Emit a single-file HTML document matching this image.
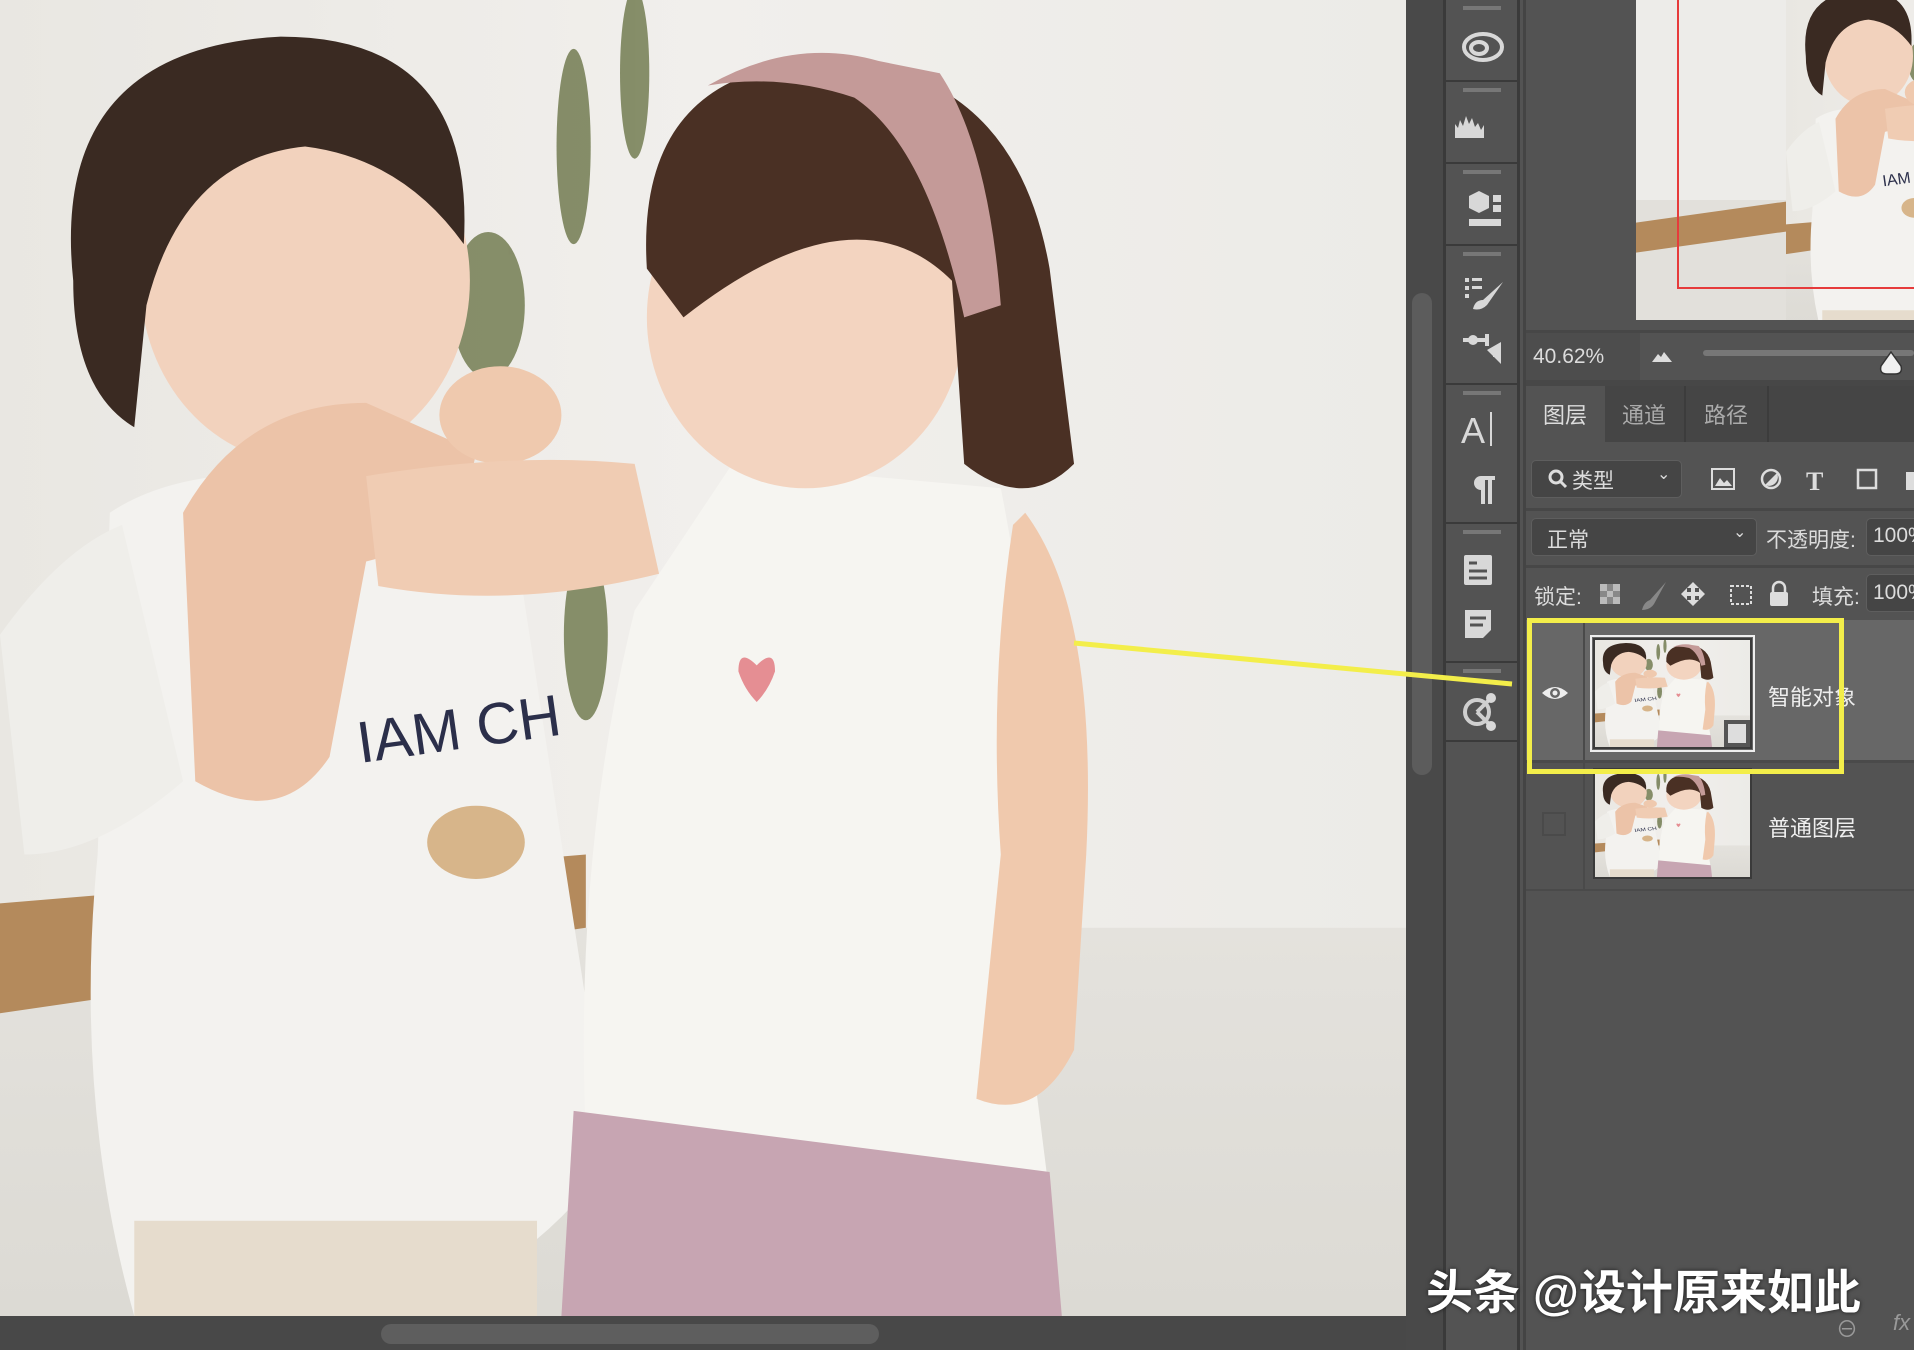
<!DOCTYPE html>
<html><head><meta charset="utf-8"><style>
*{margin:0;padding:0;box-sizing:border-box}
body{width:1914px;height:1350px;position:relative;overflow:hidden;background:#535353;font-family:"Liberation Sans","Noto Sans CJK SC",sans-serif;color:#e6e6e6}
.a{position:absolute}
.txt{font-size:22px;color:#dcdcdc;white-space:nowrap}
.box{background:#454545;border:1px solid #5e5e5e;border-radius:5px}
</style></head><body>
<svg width="0" height="0" style="position:absolute"><defs>
<linearGradient id="bg" x1="0" x2="1"><stop offset="0" stop-color="#e9e7e2"/><stop offset=".5" stop-color="#f1efec"/><stop offset="1" stop-color="#ecebe7"/></linearGradient>
<linearGradient id="fl" y1="0" y2="1" x1="0" x2="0"><stop offset="0" stop-color="#e4e2dd"/><stop offset="1" stop-color="#dcdad4"/></linearGradient>
<symbol id="ph" viewBox="0 0 1152 1078" preserveAspectRatio="none">
<rect width="1152" height="1078" fill="url(#bg)"/>
<rect y="760" width="1152" height="318" fill="url(#fl)"/>
<polygon points="0,740 480,700 480,760 0,830" fill="#b48a5c"/>
<g fill="#6b7548" opacity=".8"><ellipse cx="470" cy="120" rx="14" ry="80"/><ellipse cx="520" cy="60" rx="12" ry="70"/><ellipse cx="400" cy="250" rx="30" ry="60"/><ellipse cx="480" cy="520" rx="18" ry="70"/></g>
<path d="M90 420 Q150 380 260 390 L420 430 L500 950 Q420 1060 300 1078 L110 1078 Q60 900 80 700 Z" fill="#f3f2ef"/>
<path d="M0 520 Q50 450 100 430 L150 640 Q80 700 20 700 Z" fill="#efeeea"/>
<ellipse cx="250" cy="230" rx="135" ry="150" fill="#f2d2bd"/>
<path d="M60 230 Q40 40 230 30 Q390 30 380 200 Q330 130 250 120 Q150 130 120 250 L110 350 Q60 320 60 230Z" fill="#3a2a22"/>
<path d="M150 420 Q200 330 300 330 L390 370 Q380 440 300 460 L270 620 Q230 680 160 640 Z" fill="#ecc3a8"/>
<ellipse cx="410" cy="340" rx="50" ry="40" fill="#efc9ae"/>
<text x="295" y="625" font-family="Liberation Sans" font-size="48" fill="#2b2f4a" transform="rotate(-8 295 625)">IAM CH</text>
<ellipse cx="390" cy="690" rx="40" ry="30" fill="#d7b58a"/>
<rect x="110" y="1000" width="330" height="78" fill="#e6dccd"/>
<path d="M600 380 L820 400 Q860 600 840 820 L860 980 Q700 960 480 930 Q470 700 520 500 Z" fill="#f6f5f1"/>
<path d="M470 910 L860 960 L870 1078 L460 1078 Z" fill="#c7a5b2"/>
<ellipse cx="660" cy="260" rx="130" ry="140" fill="#f3d4c0"/>
<path d="M530 220 Q520 60 670 50 Q830 50 860 220 L880 380 Q840 420 790 380 L780 230 Q700 150 560 260 Z" fill="#4a3024"/>
<path d="M580 70 Q650 30 720 50 L770 60 Q810 120 820 250 L790 260 Q760 120 700 80 Q640 60 580 70Z" fill="#c49a98"/>
<path d="M840 420 Q900 500 890 700 L880 860 Q850 920 800 900 L820 700 Q810 560 830 430Z" fill="#f0c9ad"/>
<path d="M300 390 Q420 370 520 380 L540 470 Q420 500 310 480Z" fill="#f0ccb3"/>
<path d="M620 545 q-15 -15 -15 5 q5 15 15 25 q10 -10 15 -25 q0 -20 -15 -5z" fill="#e58e93"/>
</symbol>
</defs></svg>

<svg class="a" style="left:0;top:0" width="1406" height="1316"><use href="#ph" width="1406" height="1316"/></svg>
<div class="a" style="left:0;top:1316px;width:1406px;height:34px;background:#484848"></div>
<div class="a" style="left:381px;top:1324px;width:498px;height:20px;border-radius:10px;background:#5e5e5e"></div>
<div class="a" style="left:1406px;top:0;width:37px;height:1350px;background:#494949"></div>
<div class="a" style="left:1412px;top:293px;width:20px;height:482px;border-radius:10px;background:#5c5c5c"></div>
<div class="a" style="left:1443px;top:0;width:77px;height:1350px;background:#535353;border-left:3px solid #3a3a3a;border-right:3px solid #3a3a3a"></div>
<div class="a" style="left:1523px;top:0;width:3px;height:1350px;background:#444"></div>
<div class="a" style="left:1446px;top:80px;width:71px;height:2px;background:#3a3a3a"></div>
<div class="a" style="left:1446px;top:162px;width:71px;height:2px;background:#3a3a3a"></div>
<div class="a" style="left:1446px;top:244px;width:71px;height:2px;background:#3a3a3a"></div>
<div class="a" style="left:1446px;top:383px;width:71px;height:2px;background:#3a3a3a"></div>
<div class="a" style="left:1446px;top:522px;width:71px;height:2px;background:#3a3a3a"></div>
<div class="a" style="left:1446px;top:661px;width:71px;height:2px;background:#3a3a3a"></div>
<div class="a" style="left:1446px;top:740px;width:71px;height:2px;background:#3a3a3a"></div>
<svg class="a" style="left:1443px;top:0" width="77" height="760" fill="#d8d8d8" stroke="#d8d8d8">
<g stroke-width="0" fill="#777">
<rect x="20" y="6" width="38" height="4"/><rect x="20" y="88" width="38" height="4"/><rect x="20" y="170" width="38" height="4"/><rect x="20" y="252" width="38" height="4"/><rect x="20" y="391" width="38" height="4"/><rect x="20" y="530" width="38" height="4"/><rect x="20" y="669" width="38" height="4"/></g>
<g fill="none" stroke-width="4"><ellipse cx="40" cy="47" rx="19" ry="13"/><ellipse cx="36" cy="48" rx="8" ry="6"/></g>
<path d="M12 138 v-14 l3 4 l2 -8 l3 6 l3 -10 l3 8 l3 -6 l3 9 l3 -4 l3 7 l3 -5 v13z" stroke="none"/>
<path d="M26 196 l10 -5 l10 5 v12 l-10 5 l-10 -5z" stroke="none"/><rect x="50" y="195" width="8" height="7" stroke="none"/><rect x="50" y="205" width="8" height="7" stroke="none"/><rect x="26" y="219" width="32" height="7" stroke="none"/>
<g stroke="none"><rect x="22" y="278" width="4" height="4"/><rect x="29" y="278" width="10" height="3"/><rect x="22" y="286" width="4" height="4"/><rect x="29" y="286" width="10" height="3"/><rect x="22" y="294" width="4" height="4"/></g>
<path d="M60 282 L40 300 q-8 0 -10 9 q8 2 14 -4z" stroke="none"/>
<path d="M20 340 h24 M44 334 v12 M50 355 h8" stroke-width="4"/><circle cx="30" cy="340" r="5" stroke="none"/><path d="M44 350 l14 -8 v22z" stroke="none"/>
<text x="18" y="443" font-size="36" stroke="none" font-family="Liberation Sans">A</text><rect x="47" y="412" width="2" height="34" stroke="none"/>
<path d="M36 476 h16 v4 h-3 v24 h-4 v-24 h-3 v24 h-4 v-14 a7 7 0 0 1 0 -14z" stroke="none"/>
<rect x="21" y="555" width="28" height="30" stroke="none" rx="2"/><g stroke="#535353" stroke-width="3"><line x1="26" y1="563" x2="34" y2="563"/><line x1="26" y1="571" x2="44" y2="571"/><line x1="26" y1="578" x2="44" y2="578"/></g>
<path d="M22 610 h26 v20 l-8 8 h-18z" stroke="none"/><g stroke="#535353" stroke-width="3"><line x1="27" y1="618" x2="43" y2="618"/><line x1="27" y1="625" x2="40" y2="625"/></g>
<g fill="none" stroke-width="4" stroke="#cfcfcf"><circle cx="34" cy="712" r="12"/><line x1="34" y1="712" x2="48" y2="698"/><line x1="34" y1="712" x2="48" y2="726"/></g><circle cx="48" cy="698" r="5" stroke="none"/><circle cx="48" cy="726" r="5" stroke="none"/>
</svg>
<div class="a" style="left:1636px;top:0;width:278px;height:320px;overflow:hidden;background:#edece9">
<div class="a" style="left:0;top:200px;width:278px;height:120px;background:#e2e0db"></div>
<div class="a" style="left:0;top:210px;width:180px;height:30px;background:#b48a5c;transform:skewY(-8deg)"></div>
<svg class="a" style="left:150px;top:-20px" width="380" height="356"><use href="#ph" width="380" height="356"/></svg>
<div class="a" style="left:41px;top:-3px;width:300px;height:292px;border:2px solid #e63b3b"></div></div>
<div class="a" style="left:1526px;top:330px;width:388px;height:3px;background:#474747"></div>
<div class="a" style="left:1526px;top:333px;width:114px;height:47px;background:#4d4d4d"></div>
<div class="a txt" style="left:1533px;top:345px;font-size:21px">40.62%</div>
<svg class="a" style="left:1650px;top:348px" width="24" height="16"><path d="M2 14 L8 6 L11 9 L14 4 L22 14z" fill="#ddd"/></svg>
<div class="a" style="left:1703px;top:350px;width:211px;height:6px;background:#777;border-radius:3px"></div>
<svg class="a" style="left:1879px;top:350px" width="24" height="26"><path d="M12 2 L22 16 q2 8 -6 8 h-8 q-8 0 -6 -8z" fill="#f0f0f0" stroke="#333" stroke-width="1.5"/></svg>
<div class="a" style="left:1526px;top:380px;width:388px;height:6px;background:#474747"></div>
<div class="a" style="left:1526px;top:386px;width:388px;height:56px;background:#454545"></div>
<div class="a" style="left:1526px;top:386px;width:79px;height:56px;background:#535353"></div>
<div class="a" style="left:1684px;top:386px;width:2px;height:56px;background:#3c3c3c"></div>
<div class="a" style="left:1767px;top:386px;width:2px;height:56px;background:#3c3c3c"></div>
<div class="a txt" style="left:1543px;top:398px">图层</div>
<div class="a txt" style="left:1622px;top:398px;color:#aaa">通道</div>
<div class="a txt" style="left:1704px;top:398px;color:#aaa">路径</div>
<div class="a box" style="left:1531px;top:460px;width:151px;height:38px"></div>
<svg class="a" style="left:1547px;top:468px" width="22" height="22"><circle cx="9" cy="9" r="6" fill="none" stroke="#ddd" stroke-width="3"/><line x1="13" y1="13" x2="19" y2="19" stroke="#ddd" stroke-width="3"/></svg>
<div class="a txt" style="left:1572px;top:465px;font-size:21px">类型</div>
<div class="a txt" style="left:1657px;top:464px;font-size:16px">⌄</div>
<svg class="a" style="left:1708px;top:464px;width:206px;height:34px" fill="#ddd">
<rect x="4" y="5" width="22" height="20" fill="none" stroke="#ddd" stroke-width="2"/><path d="M7 22 l5 -8 l4 5 l3 -3 l5 6z"/>
<circle cx="63" cy="15" r="9" fill="none" stroke="#ddd" stroke-width="2.5"/><path d="M57 21 L69 9 A9 9 0 0 1 57 21z"/>
<text x="98" y="26" font-size="26" font-family="Liberation Serif" font-weight="bold">T</text>
<rect x="150" y="6" width="18" height="18" fill="none" stroke="#ddd" stroke-width="2.5"/>
<rect x="198" y="8" width="8" height="18"/></svg>
<div class="a" style="left:1526px;top:508px;width:388px;height:3px;background:#474747"></div>
<div class="a box" style="left:1531px;top:518px;width:226px;height:38px"></div>
<div class="a txt" style="left:1547px;top:524px;font-size:21px">正常</div>
<div class="a txt" style="left:1733px;top:522px;font-size:16px">⌄</div>
<div class="a txt" style="left:1766px;top:524px;font-size:21px">不透明度:</div>
<div class="a box" style="left:1866px;top:518px;width:60px;height:38px"></div>
<div class="a txt" style="left:1873px;top:524px;font-size:21px">100%</div>
<div class="a" style="left:1526px;top:565px;width:388px;height:3px;background:#474747"></div>
<div class="a txt" style="left:1534px;top:581px;font-size:21px">锁定:</div>
<svg class="a" style="left:1598px;top:578px;width:270px;height:36px" fill="#ddd">
<g fill="#888"><rect x="2" y="6" width="20" height="20"/></g><g fill="#bbb"><rect x="2" y="6" width="7" height="7"/><rect x="15" y="6" width="7" height="7"/><rect x="9" y="13" width="6" height="6"/><rect x="2" y="19" width="7" height="7"/><rect x="15" y="19" width="7" height="7"/></g>
<path d="M68 4 L52 22 q-6 2 -8 10 q8 0 12 -6z" fill="#888"/>
<path d="M95 4 l6 6 h-4 v4 h4 v-4 l6 6 l-6 6 v-4 h-4 v4 h4 l-6 6 l-6 -6 h4 v-4 h-4 v4 l-6 -6 l6 -6 v4 h4 v-4 h-4z"/>
<rect x="133" y="8" width="20" height="18" fill="none" stroke="#ddd" stroke-width="2" stroke-dasharray="3 2"/>
<rect x="172" y="14" width="18" height="14" rx="2"/><path d="M175 14 v-4 a6 6 0 0 1 12 0 v4" fill="none" stroke="#ddd" stroke-width="2.5"/></svg>
<div class="a txt" style="left:1812px;top:581px;font-size:21px">填充:</div>
<div class="a box" style="left:1866px;top:574px;width:60px;height:38px"></div>
<div class="a txt" style="left:1873px;top:581px;font-size:21px">100%</div>
<div class="a" style="left:1526px;top:620px;width:388px;height:140px;background:#676767"></div>
<div class="a" style="left:1583px;top:620px;width:2px;height:270px;background:#4a4a4a"></div>
<div class="a" style="left:1526px;top:760px;width:388px;height:3px;background:#4a4a4a"></div>
<div class="a" style="left:1526px;top:889px;width:388px;height:2px;background:#4a4a4a"></div>
<svg class="a" style="left:1540px;top:683px" width="30" height="20"><path d="M2 10 Q15 -2 28 10 Q15 22 2 10z" fill="#eee"/><circle cx="15" cy="10" r="5" fill="#676767"/><circle cx="15" cy="10" r="2.5" fill="#eee"/></svg>
<div class="a" style="left:1542px;top:812px;width:24px;height:24px;border:2px solid #4a4a4a"></div>
<div class="a" style="left:1590px;top:635px;width:165px;height:117px;border:2px solid #eee"></div>
<div class="a" style="left:1593px;top:638px;width:159px;height:111px;background:#3a3a3a;padding:2px"><svg width="155" height="107" style="display:block"><use href="#ph" width="155" height="107"/></svg></div>
<div class="a" style="left:1724px;top:720px;width:26px;height:27px;background:#555"><div class="a" style="left:4px;top:4px;width:18px;height:19px;background:#ddd"></div></div>
<div class="a" style="left:1593px;top:768px;width:159px;height:111px;background:#3a3a3a;padding:2px"><svg width="155" height="107" style="display:block"><use href="#ph" width="155" height="107"/></svg></div>
<div class="a txt" style="left:1768px;top:680px;font-size:22px;color:#eee">智能对象</div>
<div class="a txt" style="left:1768px;top:811px;font-size:22px;color:#eee">普通图层</div>
<svg class="a" style="left:0;top:0" width="1914" height="1350"><line x1="1074" y1="643" x2="1512" y2="684" stroke="#f3ee4a" stroke-width="5"/></svg>
<div class="a" style="left:1527px;top:618px;width:317px;height:156px;border:5px solid #f3ee4a"></div>
<div class="a" style="left:1426px;top:1254px;font-size:47px;font-weight:bold;color:#fff;white-space:nowrap;text-shadow:0 0 4px rgba(0,0,0,.7)">头条 @设计原来如此</div>
<div class="a txt" style="left:1836px;top:1312px;color:#999">⊖</div>
<div class="a txt" style="left:1893px;top:1310px;color:#999;font-style:italic">fx</div>
</body></html>
